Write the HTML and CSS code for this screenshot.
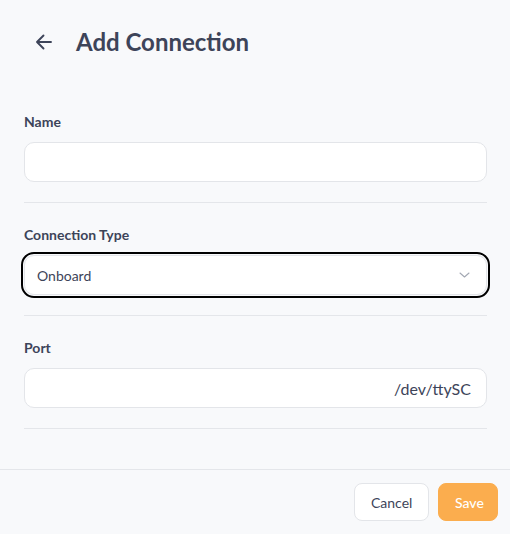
FILE: index.html
```html
<!DOCTYPE html>
<html lang="en">
<head>
<meta charset="utf-8">
<title>Add Connection</title>
<link rel="stylesheet" href="styles.css">
</head>
<body>
<div class="page">
  <header class="header">
    <svg class="back" width="18" height="18" viewBox="0 0 18 18" fill="none" stroke="currentColor" stroke-width="1.9" stroke-linecap="round" stroke-linejoin="round"><path d="M16 9H2M8.5 2.5L2 9l6.5 6.5"/></svg>
    <h1 class="title">Add Connection</h1>
  </header>
  <main class="form">
    <section class="field">
      <label class="label">Name</label>
      <div class="input"></div>
    </section>
    <section class="field">
      <label class="label">Connection Type</label>
      <div class="input select focused">
        <span class="value">Onboard</span>
        <svg class="chev" width="11" height="6" viewBox="0 0 11 6" fill="none" stroke="currentColor" stroke-width="1.1" stroke-linecap="round" stroke-linejoin="round"><path d="M1 1l4.5 4L10 1"/></svg>
      </div>
    </section>
    <section class="field">
      <label class="label">Port</label>
      <div class="input port"><span class="value big">/dev/ttySC</span></div>
    </section>
  </main>
  <footer class="footer">
    <button class="btn cancel">Cancel</button>
    <button class="btn save">Save</button>
  </footer>
</div>
</body>
</html>
```
FILE: styles.css
```css
* { box-sizing: border-box; }
html, body { margin: 0; padding: 0; }
body {
  background: #f8f9fb;
  font-family: Lato, "Liberation Sans", sans-serif;
  color: #3d4459;
}
.page {
  display: flex;
  flex-direction: column;
  height: 100vh;
}
.header {
  display: flex;
  align-items: center;
  gap: 23px;
  padding: 27px 24px 0 35px;
}
.back { color: #3d4459; flex: none; }
.title {
  margin: 0;
  font-size: 24px;
  line-height: 30px;
  font-weight: 700;
  color: #3d4459;
}
.form {
  padding: 55px 23px 0 24px;
  display: flex;
  flex-direction: column;
  gap: 22px;
}
.field {
  display: flex;
  flex-direction: column;
  gap: 10px;
  padding-bottom: 20px;
  border-bottom: 1px solid #e4e6ea;
}
.label {
  font-size: 14px;
  line-height: 20px;
  font-weight: 700;
  color: #3d4459;
}
.input {
  height: 40px;
  background: #fff;
  border: 1px solid #e3e5e9;
  border-radius: 10px;
  display: flex;
  align-items: center;
  padding: 0 12px;
}
.select {
  justify-content: space-between;
  padding-right: 16px;
}
.focused {
  outline: 2px solid #000;
  outline-offset: 1px;
}
.value {
  font-size: 14px;
  color: #3d4459;
}
.chev { color: #a3a8b3; }
.port { justify-content: flex-end; padding-right: 15px; }
.value.big { font-size: 16px; }
.footer {
  margin-top: auto;
  border-top: 1px solid #e4e6ea;
  padding: 13px 12px 13px 0;
  display: flex;
  justify-content: flex-end;
  gap: 9px;
}
.btn {
  height: 38px;
  border-radius: 8px;
  font-family: Lato, "Liberation Sans", sans-serif;
  font-size: 14px;
  padding: 0 16px;
  cursor: pointer;
}
.cancel {
  width: 75px;
  background: #fff;
  border: 1px solid #e3e5e9;
  color: #3d4459;
}
.save {
  width: 60px;
  background: #fbad4e;
  border: 1px solid #fbad4e;
  color: #fff;
  font-weight: 500;
}
```
